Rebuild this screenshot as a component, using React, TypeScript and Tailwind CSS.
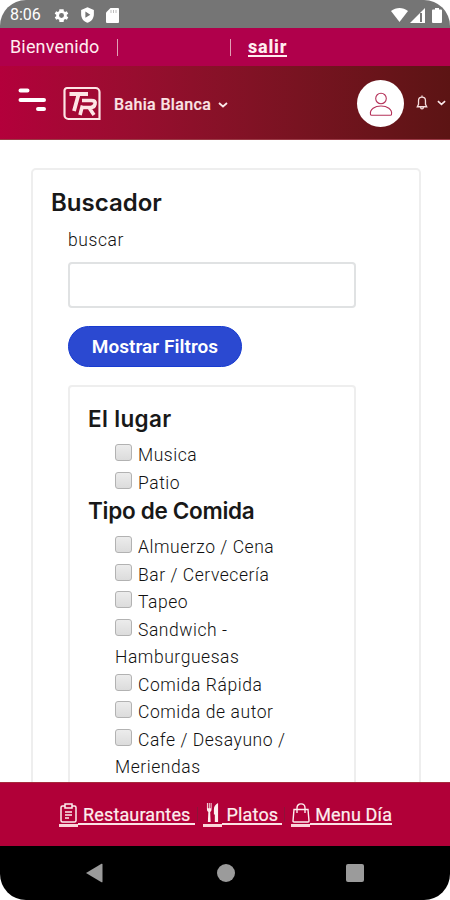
import type { ReactNode } from 'react';

const lugar = ['Musica', 'Patio'];
const comidas = [
  'Almuerzo / Cena',
  'Bar / Cervecería',
  'Tapeo',
  'Sandwich - Hamburguesas',
  'Comida Rápida',
  'Comida de autor',
  'Cafe / Desayuno / Meriendas',
];

function StatusBar() {
  return (
    <div className="h-7 shrink-0 bg-[#757575] text-white flex items-center justify-between pl-[10px] pr-[8px] pt-[2px]">
      <div className="flex items-center">
        <span className="w-[43px] text-[16px] leading-[26px]">8:06</span>
        <svg className="w-[17px] h-[17px]" viewBox="0 0 24 24" fill="currentColor">
          <path d="M19.4 13c.1-.6.1-1.4 0-2l2.1-1.6-2-3.500-2.500 1a8 8 0 0 0-1.700-1L15 3H9l-.4 2.900a8 8 0 0 0-1.700 1l-2.500-1-2 3.500L4.600 11c-.1.600-.1 1.400 0 2l-2.100 1.600 2 3.500 2.500-1a8 8 0 0 0 1.700 1L9 21h6l.4-2.900a8 8 0 0 0 1.700-1l2.500 1 2-3.500zM12 15.500a3.500 3.500 0 1 1 0-7 3.500 3.500 0 0 1 0 7z" />
        </svg>
        <svg className="w-[17px] h-[18px] ml-[9px]" viewBox="0 0 24 24" fill="currentColor" fillRule="evenodd">
          <path d="M12 1 3 5v6c0 5.600 3.800 10.700 9 12 5.200-1.300 9-6.400 9-12V5zM9 7l7 4.500L9 16z" />
        </svg>
        <svg className="w-[13px] h-[15px] ml-[10px]" viewBox="0 0 13 15" fill="currentColor">
          <path d="M4.500 0H12a1 1 0 0 1 1 1v13a1 1 0 0 1-1 1H1a1 1 0 0 1-1-1V4.500z" />
          <path d="M5 2v3M7.500 2v3M10 2v3" stroke="#a0a0a0" strokeWidth=".7" />
        </svg>
      </div>
      <div className="flex items-center">
        <svg className="w-[17px] h-[14px]" viewBox="0 0 17 14" fill="currentColor">
          <path d="M8.500 14 0 3C5-1 12-1 17 3z" />
        </svg>
        <svg className="w-[15px] h-[15px] ml-[2px]" viewBox="0 0 15 15" fill="currentColor">
          <path d="M0 15 15 0v15z" />
          <path d="M11 5v9" stroke="#757575" strokeWidth="2" />
        </svg>
        <svg className="w-[10px] h-[15px] ml-[7px]" viewBox="0 0 10 15" fill="currentColor">
          <path d="M3 0h4v1.500h2a1 1 0 0 1 1 1V14a1 1 0 0 1-1 1H1a1 1 0 0 1-1-1V2.500a1 1 0 0 1 1-1h2z" />
        </svg>
      </div>
    </div>
  );
}

function Logo() {
  return (
    <svg className="w-[38px] h-[35px] ml-[15px] mt-[2px]" viewBox="0 0 38 34" fill="none" stroke="#fde5e5">
      <path d="M4 1.500h28.500a4 4 0 0 1 4 4v27H5.500a4 4 0 0 1-4-4V4a2.500 2.500 0 0 1 2.500-2.500z" strokeWidth="2.200" />
      <path d="M6.500 7.500H25M15.500 8 11 24.500" strokeWidth="3.800" />
      <path d="M19 14h9.500q4.500 0 3.500 3.500-.8 3.500-4.500 3.500H20M26 21l5 7.500M19.500 19 17 28.500" strokeWidth="3.600" />
    </svg>
  );
}

function Chevron({ className }: { className: string }) {
  return (
    <svg className={className} viewBox="0 0 10 6" fill="none" stroke="#fbe9ea" strokeWidth="1.800">
      <path d="m1 1 4 3.500L9 1" />
    </svg>
  );
}

function Header() {
  return (
    <header className="h-[74px] shrink-0 flex items-center bg-gradient-to-r from-[#b3003b] to-[#5c1414] border-b border-[#9b3a46]">
      <svg className="w-[30px] h-6 ml-[18px] -mt-[6px]" viewBox="0 0 30 24" fill="none" stroke="#fff" strokeWidth="4" strokeLinecap="round">
        <path d="M2.500 2.500h7M2.500 12h23.500M20 21h6" />
      </svg>
      <Logo />
      <span className="ml-[13px] mt-[5px] w-[98px] text-[16px] font-medium tracking-[0.350px] text-[#fbe3e5] whitespace-nowrap [-webkit-text-stroke:0.2px]">Bahia Blanca</span>
      <Chevron className="w-[10px] h-[6px] ml-[6px] mt-[5px]" />
      <div className="ml-auto mt-[2px] w-[47px] h-[47px] rounded-full bg-white flex items-center justify-center">
        <svg className="w-6 h-6" viewBox="0 0 24 24" fill="none" stroke="#b5335a" strokeWidth="1.100">
          <circle cx="12" cy="6.500" r="5.300" />
          <path d="M1.500 22.500c-1-5.500 4.500-8.500 10.500-8.500s11.500 3 10.500 8.500q-.2.700-1 .7H2.500q-.8 0-1-.7z" />
        </svg>
      </div>
      <svg className="w-[12px] h-[15px] ml-[12px] -mt-[1px]" viewBox="0 0 12 16" fill="none" stroke="#f6dede" strokeWidth="1.400">
        <path d="M6 .5v1.500M1 12.500h10L9.700 10V6c0-5-7.400-5-7.400 0v4zM4.500 13c0 2.500 3 2.500 3 0" />
      </svg>
      <Chevron className="w-[9px] h-[6px] ml-[9px] mr-[4px]" />
    </header>
  );
}

function CheckRow({ label }: { label: string }) {
  return (
    <label className="block w-[190px] text-[17.500px] leading-[27.500px] tracking-[0.550px] font-light text-[#111]">
      <span className="inline-block w-[17px] h-[17px] mr-[6px] align-[0px] rounded-[3px] border border-[#b2b2b2] bg-gradient-to-b from-[#ececec] to-[#dcdcdc]" />
      {label}
    </label>
  );
}

function FooterLink({ icon, children }: { icon: ReactNode; children: ReactNode }) {
  return (
    <a className="flex items-start">
      <span className="w-[19px] h-6 border-b-[3px] border-[#fbd5da] flex justify-center">{icon}</span>
      <span className="h-[22px] border-b-2 border-[#fbe1e4] text-[18px] leading-[23px] tracking-[0.150px] pl-[5px] pr-[5px] whitespace-nowrap [-webkit-text-stroke:0.2px]">{children}</span>
    </a>
  );
}

function Footer() {
  return (
    <footer className="h-[64px] shrink-0 bg-[#b10038] border-t border-[#a52a3c] text-[#fdeeee] flex items-start pt-[20px] pl-[59px]">
      <FooterLink
        icon={
          <svg className="w-[17px] h-[20px]" viewBox="0 0 17 20" fill="none" stroke="currentColor" strokeWidth="1.500">
            <path d="M5 3H2.500Q1 3 1 4.500v13Q1 19 2.500 19h12q1.500 0 1.500-1.500v-13Q16 3 14.500 3H12M5 1h7v4H5zM5 9h7M5 12h7M5 15h4" />
          </svg>
        }
      >
        <span className="-mr-[1px]">Restaurantes</span>
      </FooterLink>
      <span className="w-px h-[15px] mt-[4px] ml-[2px] mr-[5px] bg-[#8d1238]" />
      <FooterLink
        icon={
          <svg className="w-[13px] h-[20px]" viewBox="0 0 14 19" preserveAspectRatio="none" fill="currentColor">
            <path d="M1 0h1v5h1V0h1v5h1V0h1v6q0 2-1.500 2.500L5 18H2l.5-9.500Q1 8 1 6zM8.500 6q0-4 4.500-6v18H9.500V11h-1z" />
          </svg>
        }
      >
        <span className="-mr-[1px]">Platos</span>
      </FooterLink>
      <span className="w-px h-[15px] mt-[4px] ml-[2px] mr-[6px] bg-[#8d1238]" />
      <FooterLink
        icon={
          <svg className="w-[18px] h-[20px]" viewBox="0 0 18 20" fill="none" stroke="currentColor" strokeWidth="1.400">
            <path d="M2 6.500h14l1 11.500q0 1-1 1H2q-1 0-1-1zM5 10V5c0-5.500 8-5.500 8 0v5" />
          </svg>
        }
      >
        <span className="-mr-[5px]">Menu Día</span>
      </FooterLink>
    </footer>
  );
}

export default function App() {
  return (
    <div className="w-[450px] h-[900px] bg-white overflow-hidden">
      <div className="h-full flex flex-col rounded-[26px] overflow-hidden font-['Roboto',sans-serif]">
        <StatusBar />
        <div className="h-[38px] shrink-0 bg-[#b0004b] text-[#ffecef] flex items-center pl-[10px] text-[18px]">
          <span className="w-[107px] -mt-[1px] tracking-[0.150px]">Bienvenido</span>
          <span className="w-px h-[17px] bg-[#e1a0b5] mr-[112px]" />
          <span className="w-px h-[17px] bg-[#e1a0b5] mr-[17px]" />
          <a className="font-extrabold h-[20px] leading-[19px] tracking-[0.800px] border-b-2 border-[#ffecef]">salir</a>
        </div>
        <Header />

        <main className="flex-1 min-h-0 overflow-hidden pt-[28px] pl-[31px]">
          <section className="w-[390px] h-[700px] rounded-[5px] border-2 border-[#eeeeee] pt-[15px] pl-[18px]">
            <h2 className="font-['Inter',sans-serif] font-semibold text-[24px] leading-[36px] text-[#181818]">Buscador</h2>
            <div className="pl-[17px]">
              <label className="block text-[17.500px] leading-7 pt-[5px] tracking-[0.600px] font-light text-[#111]">buscar</label>
              <input className="block mt-[8px] w-[288px] h-[46px] rounded-[4px] border-2 border-[#e0e2e3] bg-white" />
              <button className="block mt-[18px] w-[174px] h-[41px] rounded-full bg-[#2b49d1] border border-[#173bd0] text-white text-[19px] font-semibold pt-[2px] tracking-[0.050px]">Mostrar Filtros</button>
              <div className="mt-[18px] w-[288px] h-[500px] rounded-[4px] border-2 border-[#eeeeee] pl-[18px] pt-[15px]">
                <h3 className="font-['Inter',sans-serif] font-semibold text-[22.500px] leading-[34px] tracking-[0.350px] text-[#181818]">El lugar</h3>
                <div className="pl-[27px] pt-[6px]">
                  {lugar.map((l) => <CheckRow key={l} label={l} />)}
                </div>
                <h3 className="font-['Inter',sans-serif] font-semibold text-[22.500px] leading-[28px] tracking-[-0.300px] text-[#181818]">Tipo de Comida</h3>
                <div className="pl-[27px] pt-[9px]">
                  {comidas.map((c) => <CheckRow key={c} label={c} />)}
                </div>
              </div>
            </div>
          </section>
        </main>

        <Footer />
        <nav className="h-[54px] shrink-0 bg-black flex items-center pl-[86px]">
          <svg className="w-[17px] h-5" viewBox="0 0 17 20" fill="#9b9b9b">
            <path d="M0 10 15.500 .8q1-.5 1 .7v17q0 1.200-1 .7z" />
          </svg>
          <span className="ml-[114px] w-[18px] h-[18px] rounded-full bg-[#9b9b9b]" />
          <span className="ml-[111px] w-[18px] h-[18px] rounded-[2px] bg-[#9b9b9b]" />
        </nav>
      </div>
    </div>
  );
}
